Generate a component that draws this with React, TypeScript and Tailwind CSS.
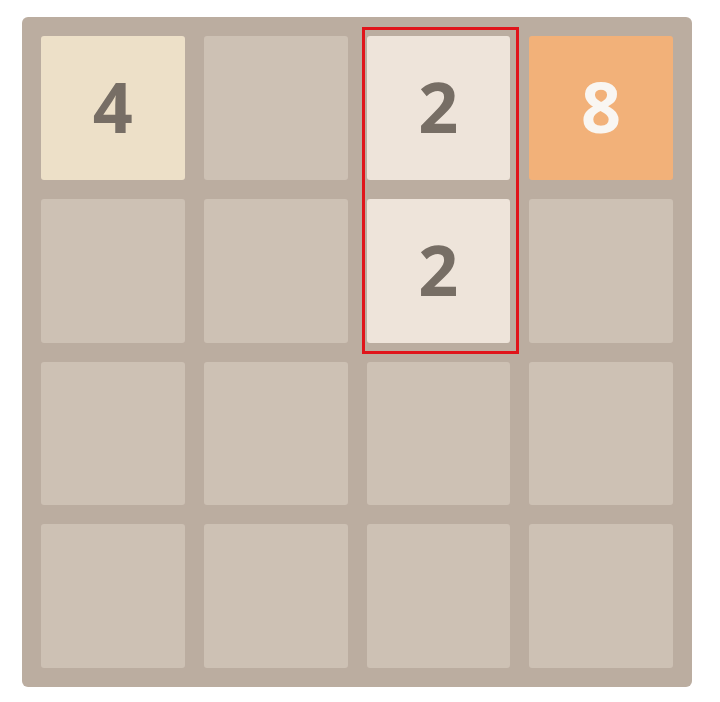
import React from "react";

type Cell = number | null;

const grid: Cell[][] = [
  [4, null, 2, 8],
  [null, null, 2, null],
  [null, null, null, null],
  [null, null, null, null],
];

function tileClass(v: Cell): string {
  if (v === 2) return "bg-[#eee4da] text-[#776e65]";
  if (v === 4) return "bg-[#ede0c8] text-[#776e65]";
  if (v === 8) return "bg-[#f2b179] text-[#f9f6f2]";
  return "bg-[#cdc1b4]";
}

export default function App() {
  return (
    <div className="w-[720px] h-[702px] bg-white pl-[22px] pt-[17px]">
      <div className="relative w-[670px] h-[670px] rounded-[6px] bg-[#bbada0] p-[19px] grid grid-cols-4 grid-rows-4 gap-[19px]">
        {grid.flat().map((v, i) => (
          <div
            key={i}
            className={`rounded-[3px] flex items-center justify-center pb-[4px] font-bold text-[70px] leading-none ${tileClass(v)}`}
            style={{ fontFamily: '"Open Sans", "Liberation Sans", sans-serif' }}
          >
            {v ?? ""}
          </div>
        ))}
        {/* highlight around the merging column */}
        <div className="absolute left-[340px] top-[10px] w-[157px] h-[327px] border-[3px] border-[#e0151b] pointer-events-none" />
      </div>
    </div>
  );
}
